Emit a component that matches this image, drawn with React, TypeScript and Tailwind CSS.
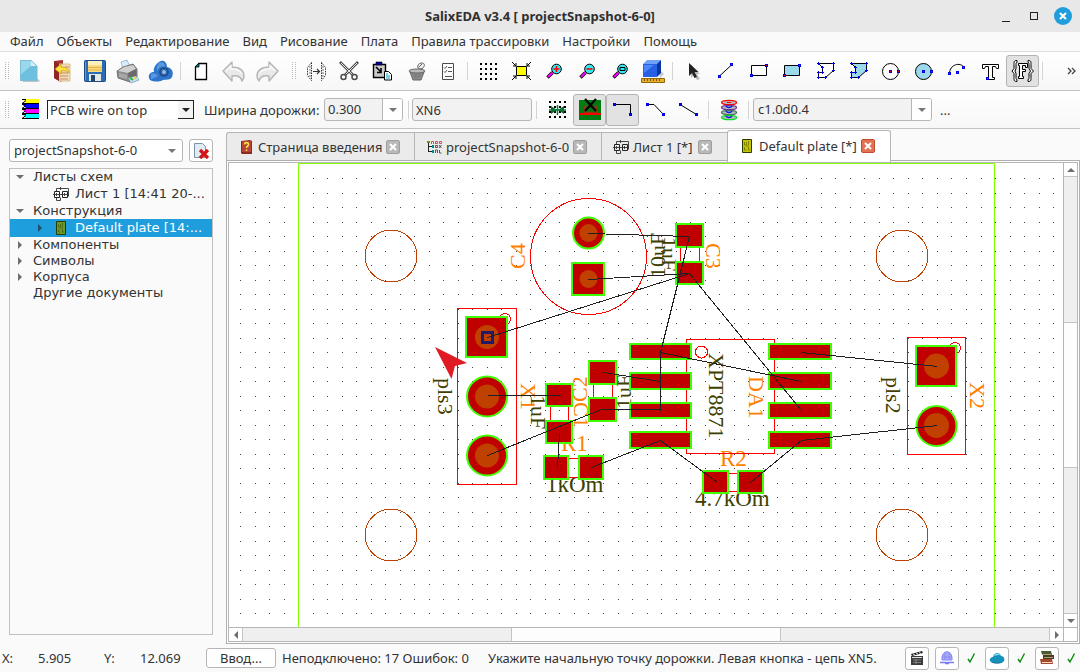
import React from 'react';

type IconProps = { children: React.ReactNode; size?: number };

const Icon: React.FC<IconProps> = ({ children, size = 25 }) => (
  <svg width={size} height={size} viewBox={`0 0 ${size} ${size}`} fill="none" aria-hidden="true" className="shrink-0">
    {children}
  </svg>
);

const Dot: React.FC<{ x: number; y: number; red?: boolean }> = ({ x, y, red }) => (
  <g shapeRendering="crispEdges">
    <rect x={x - 1} y={y - 1} width="3" height="3" fill="#0000e0" />
    {red && <rect x={x} y={y} width="1" height="1" fill="#ff0000" />}
  </g>
);

const ToolButton: React.FC<{ label: string; pressed?: boolean; children: React.ReactNode }> = ({ label, pressed, children }) => (
  <button
    type="button"
    aria-label={label}
    className={`flex h-8 w-[33px] shrink-0 items-center justify-center rounded-[3px] border ${pressed ? 'border-[#b4b4b4] bg-[#e2e2e2]' : 'border-transparent'}`}
  >
    {children}
  </button>
);

const Grip: React.FC<{ wide?: boolean }> = ({ wide }) => (
  <div className={`flex shrink-0 ${wide ? 'w-4 pl-[9px]' : 'w-3 pl-[5px]'}`}>
    <svg width="5" height="18" shapeRendering="crispEdges" aria-hidden="true">
      {[0, 2, 4, 6, 8, 10, 12, 14, 16].map((y) => (
        <g key={y} fill="#b9b9b9">
          <rect x="0" y={y} width="1" height="1" />
          <rect x="3" y={y} width="1" height="1" />
        </g>
      ))}
    </svg>
  </div>
);

const Separator: React.FC = () => (
  <div className="flex w-[7px] shrink-0 justify-center">
    <div className="h-[18px] w-px bg-[#d4d4d4]" />
  </div>
);

const Triangle: React.FC<{ dir: 'up' | 'down' | 'left' | 'right'; color?: string }> = ({ dir, color = '#6e6e6e' }) => {
  const paths = { up: 'M0 6L4 2L8 6Z', down: 'M0 2L4 6L8 2Z', left: 'M6 0L2 4L6 8Z', right: 'M2 0L6 4L2 8Z' };
  return (
    <svg width="8" height="8" viewBox="0 0 8 8" aria-hidden="true" className="shrink-0">
      <path d={paths[dir]} fill={color} />
    </svg>
  );
};

/* ---------- file and edit icons ---------- */

const NewIcon = () => (
  <Icon>
    <path d="M6 20h16l2 2-2 1H7z" fill="#b9c4c8" />
    <path d="M4 1h11l6 6v15H4z" fill="#6fc0de" />
    <path d="M4 1h11v6l-11 9z" fill="#9bd8ec" />
    <path d="M15 1v6h6z" fill="#d8f1f9" />
    <path d="M4.500 1.500h10.500l6 5.500v14.500h-16.500z" stroke="#7dbcd6" />
  </Icon>
);

const OpenIcon = () => (
  <Icon>
    <path d="M5 2l9-1v19l-2 3-7-4z" fill="#a23434" />
    <path d="M10 5h11v17H10z" fill="#f1dcb8" stroke="#d8bd94" />
    <path d="M11 14h8M11 17h8M11 20h8M16 8h4" stroke="#c58b60" />
    <path d="M5 2l5 3v17l-5-3z" fill="#8e2626" />
    <path d="M6 10l6-5v3c5 0 8 2 8 6-2-2-4-3-8-2v3z" fill="#ffe63c" stroke="#c58b10" strokeWidth=".7" />
  </Icon>
);

const SaveIcon = () => (
  <Icon>
    <rect x="2.500" y="1.500" width="21" height="21" rx="1" fill="#2b6cb4" stroke="#1b4c86" />
    <rect x="6" y="2" width="14" height="11" fill="#fbdc7c" />
    <path d="M6 2h14v4H6z" fill="#fff1bd" />
    <path d="M6 8.500h14M6 11h14" stroke="#e0b04c" />
    <rect x="7" y="15" width="12" height="7" fill="#e7e7e7" />
    <rect x="9" y="16" width="4" height="6" fill="#24466e" />
    <path d="M3.500 3v18" stroke="#5f9bd8" />
  </Icon>
);

const PrintIcon = () => (
  <Icon>
    <path d="M6 3l6-2 3 7-7 2z" fill="#d8ecfb" stroke="#8aaed0" strokeWidth=".8" />
    <path d="M2 12l6-4 10-3 4 5v8l-7 5-12-4z" fill="#8c8c8c" stroke="#5e5e5e" strokeWidth=".8" />
    <path d="M3 12l6-4 9-2 3 4-8 4z" fill="#cfcfcf" />
    <path d="M13 14l8-4v8l-7 4z" fill="#6a6a6a" />
    <path d="M4 14l8 2v4l-8-2z" fill="#a8a8a8" />
    <path d="M13 19l8-2 3 4-8 3z" fill="#bfe3fb" stroke="#6c7fa0" strokeWidth=".6" />
    <path d="M15 19l3 2" stroke="#34b434" strokeWidth="2" />
    <path d="M19 18l2 2" stroke="#e6d934" strokeWidth="2" />
  </Icon>
);

const CloudIcon = () => (
  <Icon>
    <path d="M2 21c-3-4 0-8 4-8-1-4 2-8 5-10 4-3 8 0 8 5 5 1 7 5 5 10-2 4-6 2-9 3-4 2-9 2-13 0z" fill="#2d74cc" />
    <path d="M11 4c3-2 6 0 6 4-4-2-6 1-8 4-1-3 0-5 2-8z" fill="#5b98de" />
    <path d="M3 15c3-2 6 0 7 2-3 1-5 3-7 3z" fill="#5796e0" />
    <circle cx="16" cy="13" r="4" stroke="#234f88" strokeWidth="1.600" />
    <path d="M16 8v10M11 13h10M12.500 9.500l7 7M19.500 9.500l-7 7" stroke="#234f88" />
    <circle cx="16" cy="13" r="2" fill="#8fbdf0" />
  </Icon>
);

const PageIcon = () => (
  <Icon>
    <path d="M11 4.500h7.500v16h-11V8z" fill="#fff" stroke="#000" strokeWidth="1.300" />
    <path d="M11 4v4H7z" fill="#008080" stroke="#000" strokeWidth=".8" />
  </Icon>
);

const UndoIcon: React.FC<{ flip?: boolean }> = ({ flip }) => (
  <Icon>
    <g transform={flip ? 'translate(26 0) scale(-1 1)' : undefined}>
      <path d="M2 12l9-9v5c8 0 12 4 12 9 0 2-1 4-2 5-1-4-4-6-10-5v5z" fill="#e9e9e9" stroke="#b4b4b4" strokeWidth="1.400" strokeLinejoin="round" />
      <path d="M5 12l5-5v3c5 0 9 1 11 5" stroke="#fafafa" strokeWidth="1.300" />
    </g>
  </Icon>
);

const JoinIcon = () => (
  <Icon>
    <path d="M8.500 3.500v18l-4-5v-8zM18.500 3.500v18l4-5v-8z" stroke="#333" strokeDasharray="1.500 1" />
    <path d="M6 8h2M6 11h2M6 14h2M6 17h2M19 8h2M19 11h2M19 14h2M19 17h2" stroke="#777" />
    <path d="M10 12.500h6M14 10l2.500 2.500L14 15" stroke="#333" strokeWidth="1.200" />
  </Icon>
);

const CutIcon = () => (
  <Icon>
    <path d="M4 3l13 13M22 3L9 16" stroke="#4c4c4c" strokeWidth="2.600" />
    <path d="M5 4l12 12M21 4L9 16" stroke="#e8e8e8" />
    <circle cx="7.500" cy="18" r="2.500" stroke="#4c4c4c" strokeWidth="1.500" />
    <circle cx="18.500" cy="18" r="2.500" stroke="#4c4c4c" strokeWidth="1.500" />
  </Icon>
);

const PasteIcon = () => (
  <Icon>
    <path d="M4.500 5.500h12v13h-12z" fill="#c9c9c9" stroke="#000" strokeWidth="1.400" />
    <path d="M7 3h6v3H7z" fill="#0000a0" stroke="#000" strokeWidth=".6" />
    <path d="M7 8l5 5M12 9v4.500H8" stroke="#000" strokeWidth="1.600" />
    <path d="M15.500 12.500h4l3 3v5.500h-7z" fill="#fff" stroke="#000" />
    <path d="M17 15h2M17 17h4M17 19h4" stroke="#00a8c8" strokeWidth="1.200" />
  </Icon>
);

const PotIcon = () => (
  <Icon>
    <path d="M8 13h14l-3 8h-8z" fill="#8b8b8b" stroke="#666" />
    <ellipse cx="15" cy="12" rx="8" ry="2" fill="#bcbcbc" stroke="#666" />
    <path d="M16 9c-1-3 1-5 4-5 3 0 3 3 1 5-1 1-3 1-5 0zM17 8l3-3" stroke="#666" fill="#eee" />
    <path d="M11 16h8M12 18h6" stroke="#777" />
  </Icon>
);

const ListIcon = () => (
  <Icon>
    <path d="M7.500 4.500h11v16h-11z" stroke="#4c4c4c" />
    <path d="M13 8.500h4M13 12.500h4M10 17.500h7M9 8.500l1 1 2-2.500M9 12.500l1 1 2-2.500" stroke="#555" />
  </Icon>
);

const gridCells = [4, 9, 14, 19];

const GridCells: React.FC = () => (
  <g fill="#000" shapeRendering="crispEdges">
    {gridCells.map((y) => gridCells.map((x) => <rect key={`${x}-${y}`} x={x + 1} y={y} width="2" height="2" />))}
  </g>
);

const FitIcon = () => (
  <Icon>
    <path d="M8.500 7.500h10v9h-10z" fill="#ffff00" stroke="#000" />
    <path d="M4 3l4 4M8 4v3H5M23 3l-4 4M19 4v3h3M4 21l4-4M8 20v-3H5M23 21l-4-4M19 20v-3h3" stroke="#000" />
  </Icon>
);

const ZoomIcon: React.FC<{ mode: 'in' | 'out' | 'page' }> = ({ mode }) => (
  <Icon>
    <path d="M6.500 18.500l5-5" stroke="#000" strokeWidth="3.400" />
    <path d="M7 18l4.500-4.500" stroke="#ff00ff" strokeWidth="2" />
    <circle cx="15.500" cy="10" r="4.800" fill="#30e8f4" stroke="#000" />
    {mode === 'in' && <path d="M12.500 10h6M15.500 7v6" stroke="#ff0000" strokeWidth="1.600" />}
    {mode === 'out' && <path d="M12.500 10h6" stroke="#ff0000" strokeWidth="1.600" />}
    {mode === 'page' && <path d="M13 8.500h5v3h-5z" stroke="#000" />}
  </Icon>
);

const BoxIcon = () => (
  <Icon>
    <path d="M19 10l5 5-4 4z" fill="#c6c9d4" />
    <path d="M3 5l4-4h14l-2 4z" fill="#6fa0fa" />
    <path d="M3 5h14v13H3z" fill="#2760e6" />
    <path d="M4 6h10l-10 8z" fill="#4c86f6" />
    <path d="M17 5l4-4v13l-4 4z" fill="#0c35a4" />
    <path d="M1.500 19.500h23v4h-23z" fill="#e6b02c" stroke="#96660c" />
    <path d="M4.500 20v2M7.500 20v2M10.500 20v2M13.500 20v2M16.500 20v2M19.500 20v2" stroke="#7b520a" />
  </Icon>
);

/* ---------- drawing tool icons ---------- */

const CursorIcon = () => (
  <Icon>
    <path d="M11 6v13l3-3 3 5 3-1-3-5h3z" fill="#bbb" />
    <path d="M9 4v13l3-3 2.500 5 2.500-1-2.500-5h4z" fill="#222" />
  </Icon>
);

const RectIcon: React.FC<{ fill?: string }> = ({ fill = '#fff' }) => (
  <Icon>
    <path d="M5.500 6.500h15v10h-15z" fill={fill} stroke="#000" />
    <Dot x={5} y={16} red />
    <Dot x={20} y={6} red />
  </Icon>
);

const polyPoints = [[6, 4], [21, 4], [21, 11], [13, 18], [6, 18], [6, 13], [10, 13], [10, 8]];

const PolyIcon: React.FC<{ fill?: string }> = ({ fill = '#fff' }) => (
  <Icon>
    <path d="M6.500 4.500h15v7l-8 7h-7v-5h4v-5z" fill={fill} stroke="#000" />
    <g fill="#0000e0">
      {polyPoints.map(([x, y]) => (
        <path key={`${x}-${y}`} d={`M${x - 1} ${y}h3v1h-3zM${x} ${y - 1}h1v3h-1z`} />
      ))}
    </g>
  </Icon>
);

const CircleIcon: React.FC<{ fill?: string }> = ({ fill = '#fff' }) => (
  <Icon>
    <circle cx="12.500" cy="12.500" r="8" fill={fill} stroke="#000" />
    <Dot x={12} y={12} red />
    <Dot x={20} y={12} red />
  </Icon>
);

const TextIcon = () => (
  <Icon>
    <path d="M5.500 5.500h16v4h-2l-1-2h-3v11h2v2h-8v-2h2v-11h-3l-1 2h-2z" fill="#fff" stroke="#000" />
    <Dot x={10} y={19} red />
  </Icon>
);

const FieldIcon = () => (
  <Icon>
    <path d="M7 1.500c-3 0-3 1-3 4v4l-2 2.500 2 2.500v4c0 3 0 4 3 4v-2c-1 0-1-1-1-2v-4l-1-2.500 1-2.500v-4c0-1 0-2 1-2zM18 1.500c3 0 3 1 3 4v4l2.500 2.500-2.500 2.500v4c0 3 0 4-3 4v-2c1 0 1-1 1-2v-4l1.500-2.500-1.500-2.500v-4c0-1 0-2-1-2z" fill="#fff" stroke="#000" />
    <path d="M8.500 4.500h9v4h-2v-2h-3v4h3v2h-3v5h1v2h-5v-2h1v-11h-1z" fill="#fff" stroke="#000" />
  </Icon>
);

/* ---------- routing icons ---------- */

const LayersIcon = () => (
  <Icon>
    {['#ffff00', '#0000ff', '#ff00ff', '#00ffff'].map((c, i) => (
      <g key={c} transform={`translate(0 ${i * 5})`}>
        <path d="M6 2h17v4h-13z" fill={c} />
        <path d="M6 2.500h4M6 6.500l4-3M6 6.500h17" stroke="#000" />
      </g>
    ))}
  </Icon>
);

const SnapIcon = () => (
  <Icon>
    <GridCells />
    <path d="M7 9l6 4-6 4zM20 9l-6 4 6 4z" fill="#0a6a2c" />
    <path d="M5 13h17M13.500 8v10" stroke="#0a7a34" strokeWidth="1.500" />
  </Icon>
);

const NoRouteIcon = () => (
  <Icon>
    <path d="M2 3h22v20H2z" fill="#007b12" />
    <path d="M7.500 9.500h12v6h-12z" stroke="#8c3a10" strokeWidth="1.500" />
    <path d="M2 16h22v2H2z" fill="#ff0000" />
    <path d="M8 2l11 12M19 2L8 14" stroke="#000" strokeWidth="2.200" />
  </Icon>
);

const ViaIcon = () => (
  <Icon>
    {['#ff0000', '#7030a0', '#4c6c5c', '#00e020'].map((c, i) => (
      <ellipse key={c} cx="13" cy={5.500 + i * 5} rx="7.500" ry="2.200" fill="#b9b9b9" stroke={c} strokeWidth="1.300" />
    ))}
    <path d="M10 9c1 2 5 2 6 0M10 14c1 2 5 2 6 0M10 19c1 2 5 2 6 0" stroke="#0020e0" strokeWidth="1.300" />
    <path d="M11 5.500h4" stroke="#ff0000" />
  </Icon>
);

/* ---------- small icons ---------- */

const HelpBookIcon = () => (
  <Icon size={16}>
    <path d="M3 2l9-1 2 1v13H4l-1-1z" fill="#8c2a24" />
    <path d="M4 2h9v11H4z" fill="#b5443a" />
    <path d="M6.500 5.500c0-2.500 4-2.500 4 0 0 2-2 1.500-2 3.500M8.500 10.500v1.500" stroke="#ffe03c" strokeWidth="1.600" />
  </Icon>
);

const ProjectIcon = () => (
  <Icon size={16}>
    <path d="M2.500 3v10M2.500 7.500h4M2.500 12.500h4" stroke="#222" />
    <path d="M5.500 5V2.500h2V5M9.500 5V2.500h2v2h-2M13.500 2.500h2v2h-2z" stroke="#c03040" strokeWidth=".8" />
    <path d="M9.500 6.500h2v2h-2zM13 6l2.500 3M15.500 6L13 9M9.500 14v-3h2v3M13.500 11v3h2" stroke="#333" strokeWidth=".8" />
    <path d="M6 6h2v3H6zM6 11h2v3H6z" fill="#008a8a" />
    <path d="M1 2h3v2H1z" fill="#8a8a00" />
  </Icon>
);

const SheetIcon = () => (
  <Icon size={16}>
    <path d="M1.500 5.500h5v6h-5zM9.500 5.500h5v6h-5z" stroke="#222" />
    <path d="M3.500 5v-2.500h12v8M7.500 1v3M3.500 12v2.500h4v-3M0 8.500h16M3.500 7v3M11.500 7v3" stroke="#333" strokeWidth=".9" />
  </Icon>
);

const PlateIcon: React.FC<{ fill: string }> = ({ fill }) => (
  <Icon size={16}>
    <path d="M3.500 1.500h9v13h-9z" fill={fill} stroke="#2c3a00" />
    <path d="M5.500 4v3h2v-3M9.500 3v4M5.500 9v3h2M9.500 9v3h1.500M7 8h3" stroke="#2c3a00" strokeOpacity=".45" />
  </Icon>
);

const CloseDocIcon = () => (
  <Icon size={18}>
    <path d="M2.500 1.500h8l3 3v11h-11z" fill="#dfeaf4" stroke="#7f93a8" />
    <path d="M8 8l8 8M16 8l-8 8" stroke="#d41414" strokeWidth="3.200" />
  </Icon>
);

/* ---------- form parts ---------- */

const field = 'rounded-[3px] border border-[#b6b6b6]';

const ComboBox: React.FC<{ label: string; value: string; className: string; editable?: boolean }> = ({ label, value, className, editable }) => (
  <div className={`relative flex h-[23px] shrink-0 overflow-hidden ${field} ${editable ? 'bg-[#f2f2f2]' : 'bg-white'} ${className}`}>
    <select aria-label={label} className="w-full appearance-none bg-transparent pr-5 pb-px pl-1 outline-none">
      <option>{value}</option>
    </select>
    <span className={`pointer-events-none absolute inset-y-0 right-0 flex w-5 items-center justify-center ${editable ? 'border-l border-[#b6b6b6] bg-white' : ''}`}>
      <Triangle dir="down" color="#777" />
    </span>
  </div>
);

const menu = ['Файл', 'Объекты', 'Редактирование', 'Вид', 'Рисование', 'Плата', 'Правила трассировки', 'Настройки', 'Помощь'];

const TitleBar = () => (
  <header className="grid h-8 shrink-0 grid-cols-[1fr_auto_1fr] items-center bg-[#e8e8e8]">
    <h1 className="col-start-2 font-bold text-[#303030]">SalixEDA v3.4 [ projectSnapshot-6-0]</h1>
    <div className="flex items-center justify-end gap-4 pr-2">
      <button type="button" aria-label="Свернуть" className="flex h-4 w-3 items-end pb-[2px]">
        <span className="h-px w-2 bg-[#222]" />
      </button>
      <button type="button" aria-label="Развернуть" className="h-2 w-2 border border-[#222]" />
      <button type="button" aria-label="Закрыть" className="flex h-[18px] w-[18px] items-center justify-center rounded-full bg-[#1f9ede]">
        <svg width="8" height="8" viewBox="0 0 8 8" aria-hidden="true">
          <path d="M1 1l6 6M7 1L1 7" stroke="#fff" strokeWidth="2" />
        </svg>
      </button>
    </div>
  </header>
);

const MenuBar = () => (
  <nav className="flex h-5 shrink-0 items-center gap-[13px] border-b border-[#dcdcdc] pb-[2px] pl-[10px]">
    {menu.map((item) => (
      <button key={item} type="button" className="whitespace-nowrap">
        {item}
      </button>
    ))}
  </nav>
);

const MainToolbar = () => (
  <div className="flex h-[39px] shrink-0 items-center border-b border-[#c2c2c2] bg-linear-to-b from-white to-[#f7f7f7]">
    <Grip />
    <ToolButton label="Новый"><NewIcon /></ToolButton>
    <ToolButton label="Открыть"><OpenIcon /></ToolButton>
    <ToolButton label="Сохранить"><SaveIcon /></ToolButton>
    <ToolButton label="Печать"><PrintIcon /></ToolButton>
    <ToolButton label="Облако"><CloudIcon /></ToolButton>
    <Separator />
    <ToolButton label="Страница"><PageIcon /></ToolButton>
    <ToolButton label="Отменить"><UndoIcon /></ToolButton>
    <ToolButton label="Повторить"><UndoIcon flip /></ToolButton>
    <Grip wide />
    <ToolButton label="Соединить"><JoinIcon /></ToolButton>
    <ToolButton label="Вырезать"><CutIcon /></ToolButton>
    <ToolButton label="Вставить"><PasteIcon /></ToolButton>
    <ToolButton label="Удалить"><PotIcon /></ToolButton>
    <ToolButton label="Свойства"><ListIcon /></ToolButton>
    <Separator />
    <ToolButton label="Сетка">
      <Icon>
        <GridCells />
      </Icon>
    </ToolButton>
    <ToolButton label="Показать всё"><FitIcon /></ToolButton>
    <ToolButton label="Увеличить"><ZoomIcon mode="in" /></ToolButton>
    <ToolButton label="Уменьшить"><ZoomIcon mode="out" /></ToolButton>
    <ToolButton label="Масштаб окна"><ZoomIcon mode="page" /></ToolButton>
    <ToolButton label="3D вид"><BoxIcon /></ToolButton>
    <Separator />
    <ToolButton label="Выбор"><CursorIcon /></ToolButton>
    <ToolButton label="Линия">
      <Icon>
        <path d="M6 17.500l13-12" stroke="#000" />
        <Dot x={6} y={17} red />
        <Dot x={18} y={5} red />
      </Icon>
    </ToolButton>
    <ToolButton label="Прямоугольник"><RectIcon /></ToolButton>
    <ToolButton label="Залитый прямоугольник"><RectIcon fill="#9bd9ec" /></ToolButton>
    <ToolButton label="Многоугольник"><PolyIcon /></ToolButton>
    <ToolButton label="Залитый многоугольник"><PolyIcon fill="#9bd9ec" /></ToolButton>
    <ToolButton label="Окружность"><CircleIcon /></ToolButton>
    <ToolButton label="Круг"><CircleIcon fill="#9bd9ec" /></ToolButton>
    <ToolButton label="Дуга">
      <Icon>
        <path d="M5.500 14.500c0-9 11-12 14.500-6" stroke="#000" />
        <Dot x={5} y={14} red />
        <Dot x={13} y={13} red />
        <Dot x={19} y={8} red />
      </Icon>
    </ToolButton>
    <ToolButton label="Текст"><TextIcon /></ToolButton>
    <ToolButton label="Поле" pressed><FieldIcon /></ToolButton>
    <Separator />
    <button type="button" aria-label="Ещё" className="ml-auto pr-1">
      <svg width="9" height="8" viewBox="0 0 9 8" fill="none" stroke="#444" strokeWidth="1.300" aria-hidden="true">
        <path d="M1 1l3 3-3 3M5 1l3 3-3 3" />
      </svg>
    </button>
  </div>
);

const RouteToolbar = () => (
  <div className="flex h-[38px] shrink-0 items-center border-b border-[#c2c2c2] bg-linear-to-b from-white to-[#f7f7f7]">
    <Grip />
    <ToolButton label="Слои"><LayersIcon /></ToolButton>
    <div className="relative ml-[2px] flex h-[19px] w-[147px] shrink-0 border-t border-l border-[#222] bg-white">
      <select aria-label="Слой" className="w-full appearance-none bg-transparent pb-px pl-[2px] outline-none">
        <option>PCB wire on top</option>
      </select>
      <span className="pointer-events-none absolute inset-y-0 right-0 flex w-4 items-center justify-center border-r border-b border-[#222] bg-[#f4f4f4]">
        <Triangle dir="down" color="#222" />
      </span>
    </div>
    <label htmlFor="wire-width" className="ml-[10px] w-[120px] shrink-0 whitespace-nowrap">Ширина дорожки:</label>
    <div className={`relative flex h-[23px] w-[79px] shrink-0 overflow-hidden bg-[#f2f2f2] ${field}`}>
      <select id="wire-width" className="w-full appearance-none bg-transparent pr-5 pb-px pl-[3px] outline-none">
        <option>0.300</option>
      </select>
      <span className="pointer-events-none absolute inset-y-0 right-0 flex w-5 items-center justify-center border-l border-[#b6b6b6] bg-white">
        <Triangle dir="down" color="#777" />
      </span>
    </div>
    <div className="w-[2px] shrink-0" />
    <Separator />
    <input aria-label="Цепь" defaultValue="XN6" className={`h-[23px] w-[120px] shrink-0 bg-[#f2f2f2] pl-[3px] outline-none ${field}`} />
    <div className="w-px shrink-0" />
    <Separator />
    <ToolButton label="Привязка"><SnapIcon /></ToolButton>
    <ToolButton label="Запрет трассировки" pressed><NoRouteIcon /></ToolButton>
    <ToolButton label="Ортогонально" pressed>
      <Icon>
        <path d="M4 7.500h16.500v10" stroke="#000" />
        <Dot x={4} y={7} />
        <Dot x={20} y={17} />
      </Icon>
    </ToolButton>
    <ToolButton label="Под углом 45">
      <Icon>
        <path d="M4 7.500h7l9.500 10" stroke="#000" />
        <Dot x={4} y={7} />
        <Dot x={20} y={17} />
      </Icon>
    </ToolButton>
    <ToolButton label="Под любым углом">
      <Icon>
        <path d="M4 7.500l16.500 10" stroke="#000" />
        <Dot x={4} y={7} />
        <Dot x={20} y={17} />
      </Icon>
    </ToolButton>
    <Separator />
    <ToolButton label="Переходное отверстие"><ViaIcon /></ToolButton>
    <Separator />
    <ComboBox label="Тип отверстия" value="c1.0d0.4" editable className="ml-px w-[179px]" />
    <button type="button" className="ml-2">...</button>
  </div>
);

/* ---------- project tree ---------- */

type TreeRow = { label: string; arrow?: 'down' | 'right'; icon?: React.ReactNode; selected?: boolean };

const tree: TreeRow[] = [
  { label: 'Листы схем', arrow: 'down' },
  { label: 'Лист 1 [14:41 20-...', icon: <SheetIcon /> },
  { label: 'Конструкция', arrow: 'down' },
  { label: 'Default plate [14:...', arrow: 'right', icon: <PlateIcon fill="#6a9a2c" />, selected: true },
  { label: 'Компоненты', arrow: 'right' },
  { label: 'Символы', arrow: 'right' },
  { label: 'Корпуса', arrow: 'right' },
  { label: 'Другие документы' },
];

const Sidebar = () => (
  <aside className="flex w-[226px] shrink-0 flex-col pt-[10px] pr-[13px] pb-[9px] pl-[9px]">
    <div className="flex gap-[6px]">
      <ComboBox label="Проект" value="projectSnapshot-6-0" className="flex-1" />
      <button type="button" aria-label="Закрыть проект" className={`flex h-[23px] w-6 items-center justify-center bg-white ${field}`}>
        <CloseDocIcon />
      </button>
    </div>
    <ul className="mt-[6px] flex-1 border border-[#c0c0c0] font-['DejaVu_Sans',sans-serif]">
      {tree.map((row) => (
        <li
          key={row.label}
          className={`flex items-center ${row.icon ? 'h-[18px] pl-[26px]' : 'h-4 pl-[6px]'} ${row.selected ? 'bg-[#1f9ede] text-white' : ''}`}
        >
          <span className="flex w-[17px] shrink-0">{row.arrow && <Triangle dir={row.arrow} color={row.selected ? '#1c4f70' : '#6e6e6e'} />}</span>
          {row.icon && <span className="mr-[6px] shrink-0">{row.icon}</span>}
          <span className="whitespace-nowrap">{row.label}</span>
        </li>
      ))}
    </ul>
  </aside>
);

/* ---------- document tabs ---------- */

type Tab = { label: string; icon: React.ReactNode; width: string; active?: boolean };

const tabs: Tab[] = [
  { label: 'Страница введения', icon: <HelpBookIcon />, width: 'w-[188px]' },
  { label: 'projectSnapshot-6-0', icon: <ProjectIcon />, width: 'w-[187px]' },
  { label: 'Лист 1 [*]', icon: <SheetIcon />, width: 'w-[126px]' },
  { label: 'Default plate [*]', icon: <PlateIcon fill="#c4c400" />, width: 'w-[164px]', active: true },
];

const Tabs = () => (
  <div role="tablist" className="flex h-[31px] shrink-0 items-end">
    {tabs.map((tab) => (
      <div
        key={tab.label}
        role="tab"
        aria-selected={!!tab.active}
        className={`flex shrink-0 items-center gap-1 border-t border-l border-[#b6b6b6] pr-[15px] pl-[11px] ${tab.width} ${tab.active ? 'z-10 -mb-[2px] h-8 rounded-t-[3px] border-r bg-white pb-[2px]' : 'h-7 bg-[#ebebeb] first:rounded-tl-[3px]'}`}
      >
        {tab.icon}
        <span className="whitespace-nowrap">{tab.label}</span>
        <button
          type="button"
          aria-label={`Закрыть ${tab.label}`}
          className={`ml-auto flex h-[14px] w-[14px] shrink-0 items-center justify-center rounded-[2px] border ${tab.active ? 'border-[#c84a30] bg-[#e27352]' : 'border-[#9e9e9e] bg-[#b8b8b8]'}`}
        >
          <svg width="8" height="8" viewBox="0 0 8 8" aria-hidden="true">
            <path d="M1 1l6 6M7 1L1 7" stroke="#fff" strokeWidth="2" />
          </svg>
        </button>
      </div>
    ))}
  </div>
);

/* ---------- board ---------- */

const gridDots = (() => {
  let d = '';
  for (let row = 0; row < 80; row++) {
    for (let col = 0; col < 150; col++) {
      d += `M${Math.floor(11.5 + col * 14.52)} ${Math.floor(15.5 + row * 14.5)}h1v1h-1z`;
    }
  }
  return d;
})();

const holes = [[391, 256], [902, 256], [391, 535], [902, 535]];

// x, y, width, height of the outer edge
const smdPads = [
  [675, 223, 29, 25], [675, 261, 29, 24],
  [545, 383, 28, 24], [545, 420, 28, 24],
  [588, 360, 29, 25], [588, 397, 29, 25],
  [543, 455, 26, 25], [578, 455, 26, 25],
  [702, 470, 27, 24], [737, 470, 27, 24],
  [629, 343, 63, 17], [629, 372, 63, 18], [629, 402, 63, 17], [629, 431, 63, 18],
  [768, 343, 64, 17], [768, 372, 64, 18], [768, 402, 64, 17], [768, 431, 64, 18],
  [465, 316, 43, 42], [571, 262, 34, 34], [915, 345, 42, 42],
];

const roundPads = [[487, 396.5, 21], [487, 455.5, 21], [588.5, 233, 16.5], [936.5, 426, 21]];

const cores = [[487, 337, 12], [487, 396.5, 12], [487, 455.5, 12], [588.5, 233, 9], [588.5, 279, 9], [936.5, 366, 12.5], [936.5, 425.5, 12.5]];

const outlines = [
  [457, 308, 59, 176], [907, 337, 58, 117], [686, 339, 88, 114],
  [680, 240, 19, 30], [550, 400, 18, 30], [593, 375, 19, 30], [560, 458, 30, 19], [720, 473, 30, 18],
];

const marks = [[505, 319, 5.5], [955, 348, 5.5], [701.5, 352, 6], [588.5, 256.5, 58]];

const wires = [
  [588, 233, 689, 236], [588, 279, 689, 273], [487, 337, 689, 273], [689, 236, 660, 352], [660, 352, 660, 410],
  [689, 273, 801, 410], [660, 352, 801, 381], [660, 381, 603, 372], [660, 409, 601, 409], [601, 409, 487, 455],
  [487, 395, 560, 395], [559, 433, 557, 467], [591, 467, 660, 440], [660, 440, 717, 482], [750, 482, 801, 440],
  [801, 440, 937, 425], [801, 352, 937, 366],
];

const orange = '#ff8000';
const olive = '#404000';

const labels = [
  { text: 'C4', x: 525, y: 269, angle: -90, color: orange },
  { text: 'C3', x: 706, y: 243, angle: 90, color: orange },
  { text: '10uF', x: 665, y: 278, angle: -90, color: olive },
  { text: '1uF', x: 662, y: 237, angle: 90, color: olive },
  { text: 'pls3', x: 438, y: 378, angle: 90, color: olive },
  { text: 'X1', x: 521, y: 383, angle: 90, color: orange },
  { text: '1uF', x: 531, y: 395, angle: 90, color: olive },
  { text: 'C2', x: 587, y: 402, angle: -90, color: orange },
  { text: 'C1', x: 574, y: 402, angle: 90, color: orange },
  { text: '1uF', x: 631, y: 409, angle: -90, color: olive },
  { text: 'R1', x: 561, y: 451, angle: 0, color: orange },
  { text: '1kOm', x: 546, y: 492, angle: 0, color: olive },
  { text: 'R2', x: 720, y: 466, angle: 0, color: orange },
  { text: '4.7kOm', x: 695, y: 506, angle: 0, color: olive },
  { text: 'XPT8871', x: 709, y: 353, angle: 90, color: olive },
  { text: 'DA1', x: 749, y: 376, angle: 90, color: orange },
  { text: 'pls2', x: 886, y: 377, angle: 90, color: olive },
  { text: 'X2', x: 970, y: 382, angle: 90, color: orange },
];

const Board = () => (
  <svg className="block h-full w-full bg-white" fill="none" aria-label="Default plate">
    <path d={gridDots} fill="#444" shapeRendering="crispEdges" />
    <g transform="translate(-229 -163)">
      <path d="M298.500 1200V163.500H994.500V1200" stroke="#80ff00" />
      <g fontFamily="'Liberation Serif', serif">
        {labels.map((l) => (
          <text key={`${l.x}-${l.y}`} transform={`translate(${l.x} ${l.y}) rotate(${l.angle})`} fontSize={l.angle ? 22 : 23} fill={l.color}>
            {l.text}
          </text>
        ))}
      </g>
      <g stroke="#c04000" shapeRendering="crispEdges">
        {holes.map(([x, y]) => <circle key={`${x}-${y}`} cx={x} cy={y} r="26" />)}
      </g>
      <g stroke="#ff0000" shapeRendering="crispEdges">
        {outlines.map(([x, y, w, h]) => <rect key={`${x}-${y}`} x={x + 0.5} y={y + 0.5} width={w} height={h} />)}
        {marks.map(([x, y, r]) => <circle key={`${x}-${y}`} cx={x} cy={y} r={r} />)}
      </g>
      <g fill="#c00000" stroke="#40ff00" strokeWidth="2">
        {smdPads.map(([x, y, w, h]) => <rect key={`${x}-${y}`} x={x + 1} y={y + 1} width={w - 2} height={h - 2} />)}
        {roundPads.map(([x, y, r]) => <circle key={`${x}-${y}`} cx={x} cy={y} r={r - 1} />)}
      </g>
      <g fill="#c04000">
        {cores.map(([x, y, r]) => <circle key={`${x}-${y}`} cx={x} cy={y} r={r} />)}
      </g>
      <rect x="482.500" y="332.500" width="10" height="10" stroke="#221a66" strokeWidth="3" />
      <g stroke="#202020" shapeRendering="crispEdges">
        {wires.map(([x1, y1, x2, y2]) => (
          <line key={`${x1}-${y1}-${x2}-${y2}`} x1={x1 + 0.5} y1={y1 + 0.5} x2={x2 + 0.5} y2={y2 + 0.5} />
        ))}
      </g>
      <path d="M435 347l32 16-12 3-3.500 13z" fill="#e01b24" />
    </g>
  </svg>
);

const arrowBox = 'flex h-[13px] w-[13px] shrink-0 items-center justify-center bg-white';

const Workspace = () => (
  <section className="flex min-w-0 flex-1 flex-col">
    <Tabs />
    <div className="flex min-h-0 flex-1 border border-[#b0b0b0] bg-white p-px">
      <div className="grid min-h-0 flex-1 grid-cols-[minmax(0,1fr)_14px] grid-rows-[minmax(0,1fr)_14px] border border-[#b6b6b6]">
        <Board />
        <div className="flex flex-col border-l border-[#b6b6b6]">
          <button type="button" aria-label="Вверх" className={arrowBox}><Triangle dir="up" /></button>
          <div className="flex-1 border-t border-[#c4c4c4] bg-[#efefef]" />
          <div className="flex-1 border-y border-[#c4c4c4] bg-[#fdfdfd]" />
          <div className="flex-1 border-b border-[#c4c4c4] bg-[#efefef]" />
          <button type="button" aria-label="Вниз" className={arrowBox}><Triangle dir="down" /></button>
        </div>
        <div className="flex border-t border-[#b6b6b6]">
          <button type="button" aria-label="Влево" className={arrowBox}><Triangle dir="left" /></button>
          <div className="flex-1 border-l border-[#c4c4c4] bg-[#efefef]" />
          <div className="flex-1 border-x border-[#c4c4c4] bg-[#fdfdfd]" />
          <div className="flex-1 border-r border-[#c4c4c4] bg-[#efefef]" />
          <button type="button" aria-label="Вправо" className={arrowBox}><Triangle dir="right" /></button>
        </div>
        <div className="border-t border-l border-[#b6b6b6]" />
      </div>
    </div>
  </section>
);

/* ---------- status bar ---------- */

const statusButton = `flex h-[23px] w-6 shrink-0 items-center justify-center bg-white ${field}`;

const Check = () => (
  <svg width="10" height="12" viewBox="0 0 10 12" fill="none" aria-hidden="true" className="mx-2 shrink-0 last:mr-[3px]">
    <path d="M1 7l2 3L7.500 1.500" stroke="#0a8a0a" strokeWidth="1.400" />
  </svg>
);

const StatusBar = () => (
  <footer className="flex h-7 shrink-0 items-center whitespace-nowrap">
    <span className="w-9 pl-[2px]">X:</span>
    <span className="w-[68px] pl-[2px]">5.905</span>
    <span className="w-9">Y:</span>
    <span className="w-[66px]">12.069</span>
    <button type="button" className={`h-5 w-[70px] bg-white ${field}`}>Ввод...</button>
    <span className="ml-[6px] w-[206px]">Неподключено: 17 Ошибок: 0</span>
    <span>Укажите начальную точку дорожки. Левая кнопка - цепь XN5.</span>
    <div className="ml-auto flex items-center">
      <button type="button" aria-label="Видео" className={`${statusButton} mr-[6px]`}>
        <Icon size={16}>
          <path d="M2 6h12v9H2z" fill="#3c3c3c" />
          <path d="M2 4l11-3 1 2-11 3z" fill="#222" />
          <path d="M4 4l2 1M7 3l2 1M10 2.500l2 1M3 7.500h10" stroke="#ddd" />
          <path d="M4 10h8M4 12.500h8M7 9v5" stroke="#999" strokeWidth=".7" />
        </Icon>
      </button>
      <button type="button" aria-label="Сервер" className={statusButton}>
        <Icon size={16}>
          <path d="M3 10c-1-11 11-11 10 0z" fill="#a9acf8" stroke="#8286f4" />
          <path d="M6 3v7M10 3v7M3 7h10" stroke="#8286f4" strokeWidth=".8" />
          <path d="M1 12.500h14M6 13.500h4" stroke="#7a7ef2" strokeWidth="1.500" />
        </Icon>
      </button>
      <Check />
      <button type="button" aria-label="Облако" className={statusButton}>
        <Icon size={16}>
          <path d="M1 11c-1-3 2-4 3-4 1-5 7-5 8-1 3 0 4 3 3 5-2 3-12 3-14 0z" fill="#1592bc" />
          <path d="M5 6c1-3 5-3 6-1-2 0-4 0-6 1z" fill="#7fe0f4" />
          <path d="M2 12c3 1 9 1 12 0-3 2-9 2-12 0z" fill="#0a5a80" />
        </Icon>
      </button>
      <Check />
      <button type="button" aria-label="Библиотека" className={statusButton}>
        <Icon size={16}>
          <path d="M2 1h10l1 4H3z" fill="#4c5a34" />
          <path d="M4 5h11v4H4z" fill="#4a3c22" />
          <path d="M3 4.500h9M5 7.500h9" stroke="#c8b888" strokeWidth=".8" />
          <path d="M1 9h12l1 5H2z" fill="#a8482c" />
          <path d="M3 12.500h10" stroke="#f0dcc0" />
        </Icon>
      </button>
      <Check />
    </div>
  </footer>
);

export default function App() {
  return (
    <div className="flex h-screen flex-col overflow-hidden bg-[#fafafa] font-['Noto_Sans','Open_Sans',sans-serif] text-[13px] leading-4 text-[#333]">
      <TitleBar />
      <MenuBar />
      <MainToolbar />
      <RouteToolbar />
      <main className="flex min-h-0 flex-1">
        <Sidebar />
        <Workspace />
      </main>
      <StatusBar />
    </div>
  );
}
